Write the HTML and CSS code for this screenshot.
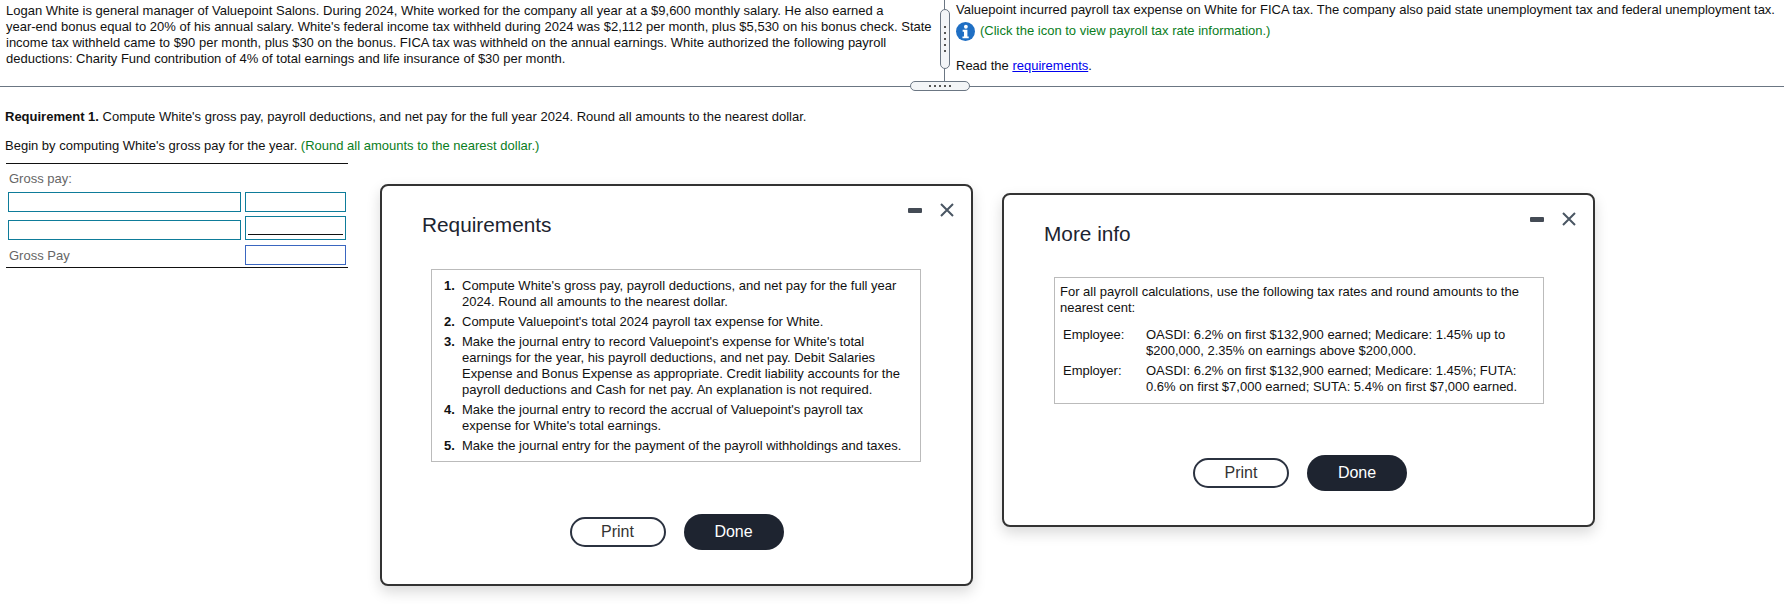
FILE: index.html
```html
<!DOCTYPE html>
<html lang="en">

<head>
  <meta charset="UTF-8">
  <title>Payroll problem</title>
  <link rel="stylesheet" href="styles.css">
</head>

<body>
  <div class="top">
    <div class="top-left">
      Logan White is general manager of Valuepoint Salons. During 2024, White worked for the company all year at a $9,600 monthly salary. He also earned a<br>
      year-end bonus equal to 20% of his annual salary. White's federal income tax withheld during 2024 was $2,112 per month, plus $5,530 on his bonus check. State<br>
      income tax withheld came to $90 per month, plus $30 on the bonus. FICA tax was withheld on the annual earnings. White authorized the following payroll<br>
      deductions: Charity Fund contribution of 4% of total earnings and life insurance of $30 per month.
    </div>
    <div class="splitter">
      <div class="grip-v"><span class="dots-v"></span></div>
    </div>
    <div class="top-right">
      <p>Valuepoint incurred payroll tax expense on White for FICA tax. The company also paid state unemployment tax and federal unemployment tax.</p>
      <p class="info-line">
        <svg class="info-icon" viewBox="0 0 20 20" width="20" height="20">
          <circle cx="10" cy="10" r="10" fill="#1f6fc4"></circle>
          <circle cx="10.4" cy="5" r="2" fill="#fff"></circle>
          <path d="M7 8.2h5v7h1.4v2H6.8v-2h1.6v-5H7z" fill="#fff"></path>
        </svg>
        <span class="green">(Click the icon to view payroll tax rate information.)</span>
      </p>
      <p class="read-line">Read the <a href="#">requirements</a>.</p>
    </div>
  </div>
  <div class="divider">
    <div class="grip-h"><span class="dots-h"></span></div>
  </div>

  <div class="work">
    <p class="req"><b>Requirement 1.</b> Compute White's gross pay, payroll deductions, and net pay for the full year 2024. Round all amounts to the nearest dollar.</p>
    <p class="begin">Begin by computing White's gross pay for the year. <span class="green">(Round all amounts to the nearest dollar.)</span></p>

    <div class="pay-table">
      <div class="pay-label">Gross pay:</div>
      <div class="pay-row">
        <div class="cell wide"></div>
        <div class="cell"></div>
      </div>
      <div class="pay-row">
        <div class="cell wide"></div>
        <div class="cell sum"><span></span></div>
      </div>
      <div class="pay-row total">
        <div class="pay-label wide">Gross Pay</div>
        <div class="cell blue"></div>
      </div>
    </div>
  </div>

  <!-- requirements window -->
  <div class="modal modal-req">
    <div class="win-btns">
      <span class="win-min"></span>
      <svg class="win-close" viewBox="0 0 14 14" width="14" height="14">
        <path d="M1 1l12 12M13 1L1 13" stroke="#4a5663" stroke-width="2" fill="none"></path>
      </svg>
    </div>
    <h2>Requirements</h2>
    <div class="box">
      <ol>
        <li>Compute White's gross pay, payroll deductions, and net pay for the full year<br>2024. Round all amounts to the nearest dollar.</li>
        <li>Compute Valuepoint's total 2024 payroll tax expense for White.</li>
        <li>Make the journal entry to record Valuepoint's expense for White's total<br>earnings for the year, his payroll deductions, and net pay. Debit Salaries<br>Expense and Bonus Expense as appropriate. Credit liability accounts for the<br>payroll deductions and Cash for net pay. An explanation is not required.</li>
        <li>Make the journal entry to record the accrual of Valuepoint's payroll tax<br>expense for White's total earnings.</li>
        <li>Make the journal entry for the payment of the payroll withholdings and taxes.</li>
      </ol>
    </div>
    <div class="actions">
      <button class="btn-print">Print</button>
      <button class="btn-done">Done</button>
    </div>
  </div>

  <!-- more info window -->
  <div class="modal modal-info">
    <div class="win-btns">
      <span class="win-min"></span>
      <svg class="win-close" viewBox="0 0 14 14" width="14" height="14">
        <path d="M1 1l12 12M13 1L1 13" stroke="#4a5663" stroke-width="2" fill="none"></path>
      </svg>
    </div>
    <h2>More info</h2>
    <div class="box info-box">
      <p>For all payroll calculations, use the following tax rates and round amounts to the<br>nearest cent:</p>
      <div class="rates">
        <div>Employee:</div>
        <div>OASDI: 6.2% on first $132,900 earned; Medicare: 1.45% up to<br>$200,000, 2.35% on earnings above $200,000.</div>
        <div>Employer:</div>
        <div>OASDI: 6.2% on first $132,900 earned; Medicare: 1.45%; FUTA:<br>0.6% on first $7,000 earned; SUTA: 5.4% on first $7,000 earned.</div>
      </div>
    </div>
    <div class="actions">
      <button class="btn-print">Print</button>
      <button class="btn-done">Done</button>
    </div>
  </div>
</body>

</html>
```

FILE: styles.css
```css
* {
  margin: 0;
  padding: 0;
  box-sizing: border-box;
}

body {
  width: 1784px;
  height: 604px;
  overflow: hidden;
  background: #fff;
  color: #111;
  font-family: "Liberation Sans", Arial, sans-serif;
  font-size: 13px;
  line-height: 16px;
  position: relative;
}

.green {
  color: #0a7d22;
}

.top {
  display: flex;
  height: 86px;
}

.top-left {
  width: 940px;
  padding: 3px 0 0 6px;
  white-space: nowrap;
}

.splitter {
  width: 8px;
  height: 86px;
  border-left: 1px solid #6b7683;
  margin-left: 4px;
  position: relative;
}

.grip-v {
  position: absolute;
  left: -5px;
  top: 9px;
  width: 10px;
  height: 60px;
  background: #f3f5f7;
  border: 1px solid #6b7683;
  border-radius: 5px;
  display: flex;
  justify-content: center;
  align-items: center;
}

.dots-v {
  width: 2px;
  height: 26px;
  background: repeating-linear-gradient(to bottom, #555 0 2px, transparent 2px 6px);
}

.top-right {
  padding: 2px 0 0 4px;
  white-space: nowrap;
}

.info-line {
  display: flex;
  align-items: center;
  gap: 5px;
  height: 20px;
  margin-top: 3px;
}

.info-icon {
  width: 19px;
  height: 19px;
}

.read-line {
  margin-top: 17px;
}

a {
  color: #0000ee;
}

.divider {
  height: 1px;
  background: #6b7683;
  position: relative;
}

.grip-h {
  position: absolute;
  left: 910px;
  top: -5px;
  width: 60px;
  height: 10px;
  background: #f3f5f7;
  border: 1px solid #6b7683;
  border-radius: 5px;
  display: flex;
  justify-content: center;
  align-items: center;
}

.dots-h {
  width: 22px;
  height: 2px;
  background: repeating-linear-gradient(to right, #555 0 2px, transparent 2px 5px);
}

.work {
  padding-left: 6px;
}

.req {
  margin-top: 22px;
  margin-left: -1px;
}

.begin {
  margin-top: 13px;
  margin-left: -1px;
}

.pay-table {
  width: 342px;
  margin-top: 9px;
  border-top: 1px solid #111;
  border-bottom: 1px solid #111;
  padding: 0 2px 2px;
}

.pay-label {
  color: #666;
  padding-left: 1px;
  height: 28px;
  line-height: 29px;
}

.pay-row {
  display: flex;
  gap: 4px;
  margin-bottom: 8px;
}

.pay-row.total {
  margin-bottom: 0;
  margin-top: -3px;
  align-items: center;
}

.pay-row.total .pay-label {
  height: 20px;
  line-height: 22px;
}

.cell {
  width: 101px;
  height: 20px;
  border: 1px solid #0e7c9a;
  position: relative;
}

.cell.wide,
.pay-label.wide {
  width: 233px;
}

.cell.sum {
  height: 24px;
  margin-top: -4px;
}

.cell.sum span {
  position: absolute;
  left: 2px;
  right: 2px;
  bottom: 4px;
  height: 1px;
  background: #111;
}

.cell.blue {
  border-color: #3a66c0;
}

/* floating windows */
.modal {
  position: absolute;
  background: #fff;
  border: 2px solid #333;
  border-radius: 8px;
  box-shadow: 0 6px 14px rgba(0, 0, 0, 0.15);
}

.modal-req {
  left: 380px;
  top: 184px;
  width: 593px;
  height: 402px;
  padding: 27px 0 0 40px;
}

.modal-info {
  left: 1002px;
  top: 193px;
  width: 593px;
  height: 334px;
  padding: 27px 0 0 40px;
}

.modal h2 {
  font-size: 20.8px;
  line-height: 24px;
  font-weight: normal;
  color: #1c2430;
}

.win-btns {
  position: absolute;
  top: 17px;
  right: 17px;
  display: flex;
  align-items: center;
  gap: 18px;
}

.win-min {
  width: 14px;
  height: 5px;
  background: #444b55;
  border-radius: 1px;
}

.box {
  width: 490px;
  margin: 32px 0 0 9px;
  border: 1px solid #bbb;
  padding: 8px 10px 7px;
}

.info-box {
  margin: 31px 0 0 10px;
  padding: 6px 5px 8px;
  white-space: nowrap;
}

ol {
  list-style: none;
  counter-reset: item;
}

ol li {
  counter-increment: item;
  padding-left: 20px;
  margin-bottom: 4px;
  white-space: nowrap;
  position: relative;
}

ol li:last-child {
  margin-bottom: 0;
}

ol li::before {
  content: counter(item) ".";
  font-weight: bold;
  position: absolute;
  left: 2px;
}

.rates {
  display: grid;
  grid-template-columns: 83px 1fr;
  row-gap: 4px;
  margin: 11px 0 0 3px;
}

.actions {
  display: flex;
  justify-content: center;
  align-items: center;
  gap: 18px;
}

.modal-req .actions {
  margin: 52px 0 0 -40px;
}

.modal-info .actions {
  margin: 51px 0 0 -37px;
}

button {
  font-family: inherit;
  font-size: 16px;
  border-radius: 18px;
}

.btn-print {
  width: 96px;
  height: 30px;
  background: #fff;
  color: #333;
  border: 2px solid #2b3240;
}

.btn-done {
  width: 100px;
  height: 36px;
  background: #1e2430;
  color: #fff;
  border: none;
}
```
